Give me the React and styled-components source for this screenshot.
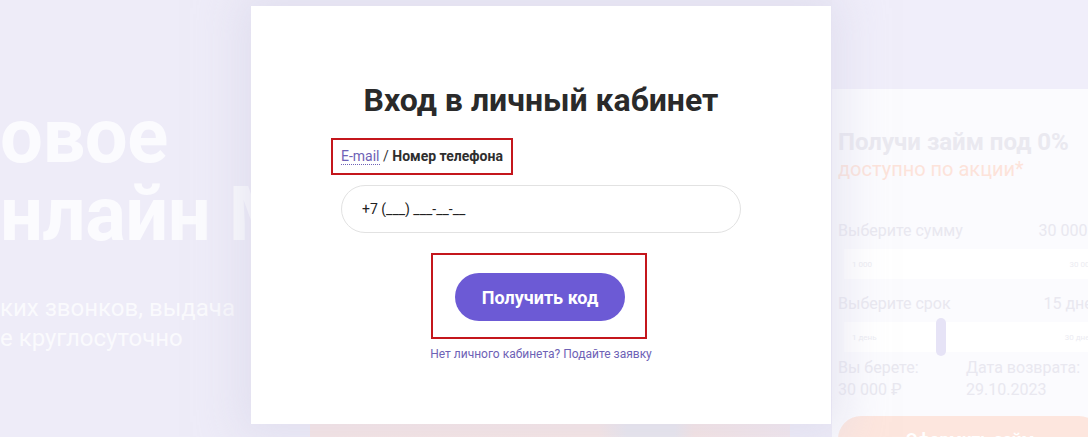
import React from 'react'
import styled, { createGlobalStyle } from 'styled-components'

const Global = createGlobalStyle`
  html, body { margin: 0; padding: 0; }
  body { font-family: Roboto, "Liberation Sans", Arial, sans-serif; background: #eeecf8; }
`

const Page = styled.div`
  position: relative;
  display: flex;
  height: 437px;
  overflow: hidden;
  background: #eeecf8;
`

const Hero = styled.div`
  width: 832px;
  flex-shrink: 0;
  display: flex;
  flex-direction: column;
  padding-top: 97px;
  box-sizing: border-box;
`

const HeroTitle = styled.h1`
  margin: 0;
  font-size: 76px;
  line-height: 78px;
  font-weight: 700;
  color: #fbfbfe;
  white-space: nowrap;
  letter-spacing: -0.5px;
`

const HeroText = styled.p`
  margin: 40px 0 0;
  font-size: 24px;
  line-height: 30px;
  color: #fafafd;
  white-space: nowrap;
`

const Banner = styled.div`
  margin: auto 0 0 310px;
  width: 480px;
  height: 14px;
  background: linear-gradient(90deg, #f9e5e2 0%, #fae6e2 60%, #e9e7ed 66%, #e9e7ed 76%, #f8e4e1 80%, #f4e7ec 100%);
`

const Side = styled.div`
  flex: 1;
  display: flex;
  flex-direction: column;
  background: #f0eefa;
`

const Card = styled.div`
  margin-top: 89px;
  width: 290px;
  flex: 1;
  padding: 38px 20px 0 6px;
  box-sizing: border-box;
  background: #fbfbfe;
`

const CardTitle = styled.div`
  font-size: 24px;
  font-weight: 700;
  color: #eae9f0;
  line-height: 30px;
`

const CardSub = styled.div`
  font-size: 20px;
  color: #fde3da;
  line-height: 24px;
  margin-bottom: 40px;
`

const Row = styled.div`
  display: flex;
  justify-content: space-between;
  align-items: baseline;
  font-size: 16px;
  color: #e9e8f0;
  line-height: 20px;
  white-space: nowrap;
`

const Track = styled.div`
  position: relative;
  display: flex;
  justify-content: space-between;
  align-items: center;
  height: 30px;
  margin: 8px 0 15px 6px;
  padding: 0 8px;
  background: #ffffff;
  font-size: 8px;
  color: #ececf2;
`

const Thumb = styled.span`
  position: absolute;
  top: -4px;
  width: 10px;
  height: 38px;
  border-radius: 5px;
  background: #e6e3f6;
`

const Summary = styled.div`
  display: grid;
  grid-template-columns: 128px 1fr;
  font-size: 16px;
  line-height: 22px;
  color: #e9e8f0;
  margin-top: -10px;
`

const CardButton = styled.div`
  margin-top: 15px;
  height: 46px;
  border-radius: 23px;
  background: #fde6de;
  color: #fff;
  font-weight: 700;
  font-size: 17px;
  display: flex;
  align-items: center;
  justify-content: center;
`

const Modal = styled.div`
  position: absolute;
  left: 251px;
  top: 6px;
  width: 580px;
  height: 418px;
  background: #ffffff;
  box-shadow: 0 0 40px 12px rgba(214, 212, 232, 0.5);
  display: flex;
  flex-direction: column;
  align-items: center;
  padding-top: 75px;
  box-sizing: border-box;
`

const Title = styled.h2`
  margin: 0;
  font-size: 32px;
  line-height: 38px;
  font-weight: 700;
  color: #2a2a2a;
`

const Form = styled.div`
  width: 400px;
  margin-top: 19px;
  display: flex;
  flex-direction: column;
`

const Mark = styled.div`
  align-self: ${p => p.$center ? 'center' : 'flex-start'};
  border: 2px solid #c4161c;
  margin-left: ${p => p.$center ? '-4px' : '-10px'};
  padding: ${p => p.$center ? '18px 20px 16px 22px' : '8px 8px'};
`

const Switch = styled.div`
  font-size: 14px;
  line-height: 17px;
  color: #333;
  white-space: nowrap;
`

const SwitchLink = styled.span`
  color: #6e62b6;
  border-bottom: 1px dotted #6e62b6;
`

const Current = styled.b`
  font-weight: 700;
  color: #2e2e2e;
`

const Input = styled.input`
  margin-top: 10px;
  height: 48px;
  border: 1px solid #e2e2e2;
  border-radius: 24px;
  padding: 0 20px;
  font-family: Roboto, "Liberation Sans", Arial, sans-serif;
  font-size: 14px;
  color: #222;
  box-sizing: border-box;
  outline: none;
  &::placeholder { color: #222; }
`

const ButtonWrap = styled.div`
  margin-top: 20px;
  display: flex;
  justify-content: center;
`

const Button = styled.button`
  width: 170px;
  height: 48px;
  border: none;
  border-radius: 24px;
  background: #6c5ad5;
  color: #fff;
  font-family: Roboto, "Liberation Sans", Arial, sans-serif;
  font-size: 18px;
  font-weight: 700;
  cursor: pointer;
`

const Hint = styled.a`
  margin-top: 8px;
  align-self: center;
  font-size: 12px;
  color: #6e62b6;
  text-decoration: none;
`

export default function App() {
  return (
    <>
      <Global />
      <Page>
        <Hero>
          <HeroTitle>овое<br />нлайн МФО</HeroTitle>
          <HeroText>ких звонков, выдача<br />е круглосуточно</HeroText>
          <Banner />
        </Hero>
        <Side>
          <Card>
            <CardTitle>Получи займ под 0%</CardTitle>
            <CardSub>доступно по акции*</CardSub>
            <Row><span>Выберите сумму</span><span>30 000 ₽</span></Row>
            <Track><span>1 000</span><span>30 000</span><Thumb style={{ right: 0 }} /></Track>
            <Row><span>Выберите срок</span><span>15 дней</span></Row>
            <Track><span>1 день</span><span>30 дней</span><Thumb style={{ left: 92 }} /></Track>
            <Summary>
              <span>Вы берете:</span><span>Дата возврата:</span>
              <span>30 000 ₽</span><span>29.10.2023</span>
            </Summary>
            <CardButton>Оформить займ</CardButton>
          </Card>
        </Side>
        <Modal>
          <Title>Вход в личный кабинет</Title>
          <Form>
            <Mark>
              <Switch>
                <SwitchLink>E-mail</SwitchLink> / <Current>Номер телефона</Current>
              </Switch>
            </Mark>
            <Input placeholder="+7 (___) ___-__-__" />
            <ButtonWrap>
              <Mark $center>
                <Button>Получить код</Button>
              </Mark>
            </ButtonWrap>
            <Hint href="#">Нет личного кабинета? Подайте заявку</Hint>
          </Form>
        </Modal>
      </Page>
    </>
  )
}
